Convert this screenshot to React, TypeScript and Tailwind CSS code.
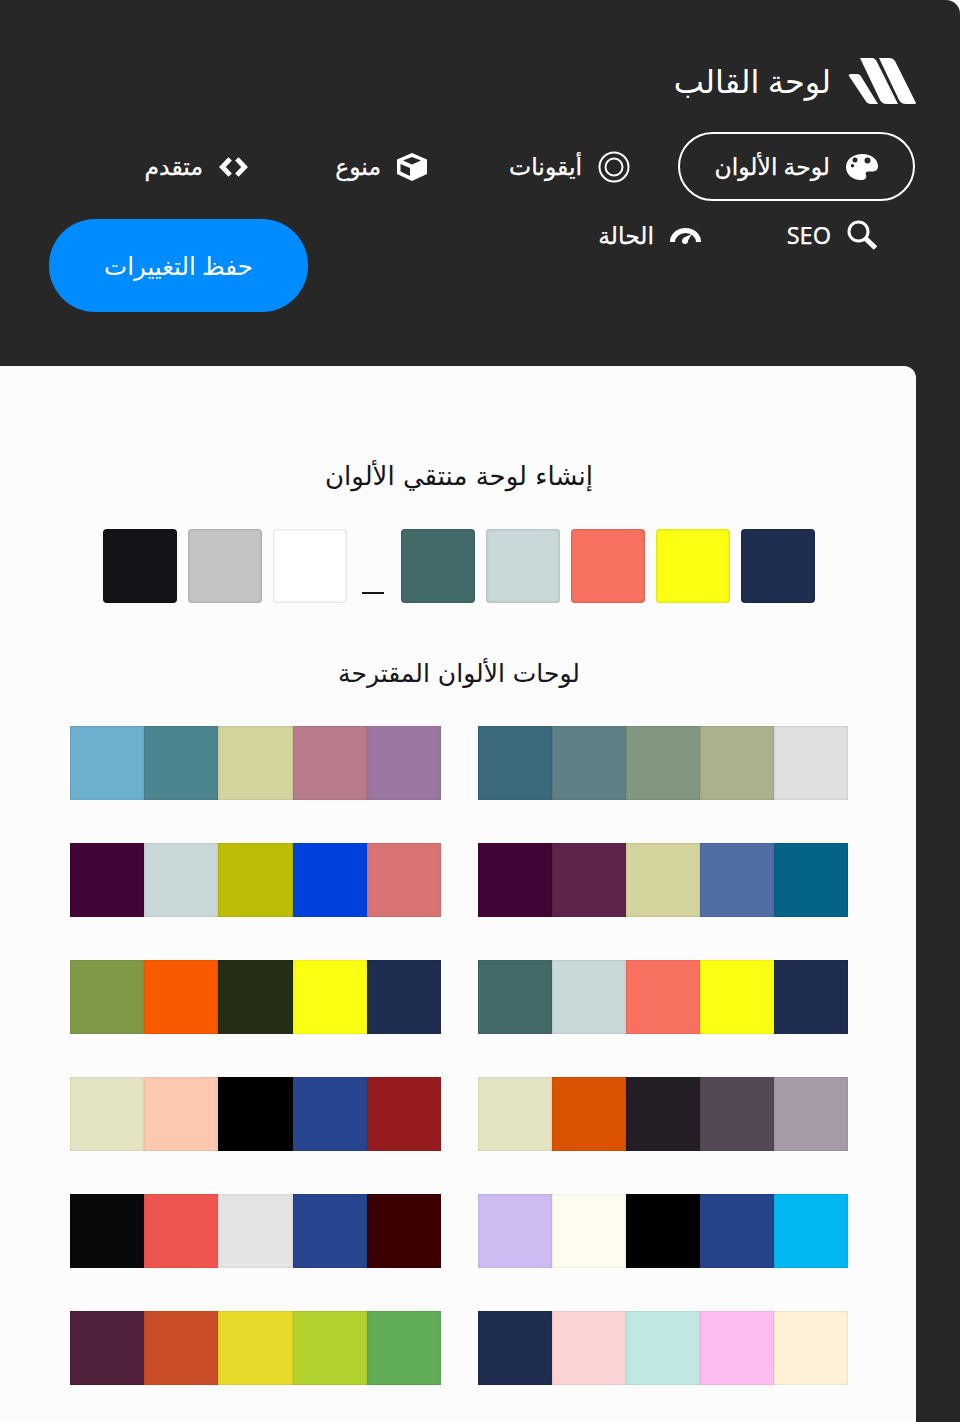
import type { ReactNode } from "react";

const rows: [string[], string[]][] = [
  [
    ["#3a6a7c", "#5f8085", "#81977f", "#acb08c", "#e0dfe0"],
    ["#6db0cc", "#4c8490", "#d3d39d", "#b87b8b", "#9b76a0"],
  ],
  [
    ["#400635", "#5f2449", "#d3d39d", "#506ea4", "#066388"],
    ["#400635", "#c9d9da", "#bdbd06", "#0041de", "#d97272"],
  ],
  [
    ["#426a69", "#c9d9da", "#f87060", "#fbff12", "#1f2d50"],
    ["#7f9947", "#f95a00", "#242f16", "#fbff12", "#1f2d50"],
  ],
  [
    ["#e4e4c2", "#db5202", "#231d24", "#544856", "#a69aa8"],
    ["#e4e4c2", "#fdc9ae", "#000000", "#27468f", "#961b1f"],
  ],
  [
    ["#cdbcf2", "#fefcef", "#000000", "#25448c", "#00b8ef"],
    ["#08090b", "#ee5550", "#e4e4e4", "#27468f", "#3c0000"],
  ],
  [
    ["#1f2d50", "#fcd3d4", "#c1e7e3", "#fdbdf0", "#fdf2d8"],
    ["#50203c", "#c94e28", "#e8d92a", "#b1d22e", "#60ac57"],
  ],
];

const Logo = () => (
  <svg viewBox="0 0 68 46" className="h-[46px] w-[68px] fill-white">
    <path d="M1 18 Q0 16 3 16 H9 Q12 16 14 20 L30 46 H23 Q19 46 17 42 Z" />
    <path d="M12 0 H24 Q27 0 29 4 L50 46 H39 Q34 46 32 42 Z" />
    <path d="M31 0 H42 Q45 0 47 3 L68 45 Q68 46 66 46 H58 Q53 46 51 42 Z" />
  </svg>
);

const PaletteIcon = () => (
  <svg viewBox="0 0 32 26" className="h-[26px] w-8 shrink-0 fill-white">
    <path
      fillRule="evenodd"
      d="M16 0 C26 0 32 6 32 12 C32 17 28 18 24 17.5 C20 17 19 19 20 21 C21 24 19 26 15 26 C6 26 0 20 0 13 C0 5 8 0 16 0 Z M9 3.5 A2.5 2.5 0 1 0 9 8.5 A2.5 2.5 0 1 0 9 3.5 Z M21.5 3.5 A3 3 0 1 0 21.5 9.5 A3 3 0 1 0 21.5 3.5 Z M6.5 10 A1.7 1.7 0 1 0 6.5 13.4 A1.7 1.7 0 1 0 6.5 10 Z"
    />
  </svg>
);

const RingIcon = () => (
  <svg viewBox="0 0 32 32" className="h-8 w-8 shrink-0 fill-none stroke-white stroke-2">
    <circle cx="16" cy="16" r="14.5" />
    <circle cx="16" cy="16" r="8.5" />
  </svg>
);

const CubeIcon = () => (
  <svg viewBox="0 0 30 28" className="h-7 w-[30px] shrink-0 fill-white">
    <path
      fillRule="evenodd"
      d="M15 0 L30 6.5 V21 L15 28 L0 21 V6.5 Z M15 4 L6 7.5 L15 11.5 L24 7.5 Z M3.5 11 V18.5 L13 23 V15 Z"
    />
  </svg>
);

const CodeIcon = () => (
  <svg viewBox="0 0 30 20" className="h-5 w-[29px] shrink-0 fill-none stroke-white stroke-[5px]">
    <path d="M11.5 1.5 L3.5 10 L11.5 18.5" />
    <path d="M18.5 1.5 L26.5 10 L18.5 18.5" />
  </svg>
);

const SearchIcon = () => (
  <svg viewBox="0 0 31 31" className="h-[31px] w-[31px] shrink-0 fill-none stroke-white">
    <circle cx="11.5" cy="11.5" r="9.5" strokeWidth="3" />
    <path d="M18 18 L28.5 28" strokeWidth="5" />
  </svg>
);

const GaugeIcon = () => (
  <svg viewBox="0 0 31 16" className="h-4 w-[31px] shrink-0">
    <path d="M0 14 A15.5 14 0 0 1 31 14 L26 14 A10.5 9 0 0 0 5 14 Z" fill="white" />
    <path d="M13 10 L22 6 L17 14 Z" fill="white" />
    <circle cx="15" cy="13" r="3" fill="white" />
  </svg>
);

const NavItem = ({
  icon,
  label,
  active,
  width,
}: {
  icon: ReactNode;
  label: string;
  active?: boolean;
  width: string;
}) => (
  <div
    className={`flex h-[69px] items-center gap-[16px] rounded-[35px] border-2 px-[35px] text-[23.5px] whitespace-nowrap text-white [-webkit-text-stroke:0.25px_white] ${width} ${
      active ? "border-white" : "border-transparent"
    }`}
  >
    {icon}
    <span>{label}</span>
  </div>
);

const Swatch = ({ color }: { color: string }) => (
  <div
    className="h-[74px] w-[74px] rounded-[4px] shadow-[inset_0_0_3px_rgba(0,0,0,0.25)]"
    style={{ backgroundColor: color }}
  />
);

const Palette = ({ colors }: { colors: string[] }) => (
  <div className="flex h-[74px]">
    {colors.map((c, i) => (
      <div
        key={i}
        className="h-full flex-1 shadow-[inset_0_0_2px_rgba(0,0,0,0.2)]"
        style={{ backgroundColor: c }}
      />
    ))}
  </div>
);

export default function App() {
  return (
    <div
      dir="rtl"
      className="h-[1422px] w-[960px] overflow-hidden bg-white font-['Noto_Sans','DejaVu_Sans',sans-serif]"
    >
      <div className="h-full rounded-tr-[14px] bg-[#272727] pt-[58px]">
        {/* Header */}
        <div className="flex items-center gap-[17px] pr-[44px]">
          <Logo />
          <h1 className="text-[32px] leading-[46px] font-normal text-white">لوحة القالب</h1>
        </div>

        {/* Tabs */}
        <div className="mt-[28px] h-[234px] pr-[45px] pl-[49px]">
          <div className="flex gap-[11px]">
            <NavItem active width="w-[237px]" icon={<PaletteIcon />} label="لوحة الألوان" />
            <NavItem width="w-[192px]" icon={<RingIcon />} label="أيقونات" />
            <NavItem width="w-[168px]" icon={<CubeIcon />} label="منوع" />
            <NavItem width="w-[183px]" icon={<CodeIcon />} label="متقدم" />
          </div>
          <div className="flex items-start justify-between">
            <div className="flex gap-[12px]">
              <NavItem width="w-[165px]" icon={<SearchIcon />} label="SEO" />
              <NavItem width="w-[177px]" icon={<GaugeIcon />} label="الحالة" />
            </div>
            <button className="mt-[18px] h-[93px] w-[259px] rounded-[46px] bg-[#008cff] pt-[2px] text-[24.5px] text-white">
              حفظ التغييرات
            </button>
          </div>
        </div>

        {/* Panel */}
        <div className="mr-auto h-[1056px] w-[916px] rounded-tr-[12px] bg-[#fcfcfc] pt-[92px] pr-[68px] pl-[70px] text-[#15151a]">
          <h2 className="text-center font-['DejaVu_Sans',sans-serif] text-[26px] leading-[37px] font-normal">
            إنشاء لوحة منتقي الألوان
          </h2>
          <div className="mt-[34px] flex items-end justify-center gap-[11px]">
            {["#1f2d50", "#fbff12", "#f87060", "#c9d9da", "#426a69"].map((c) => (
              <Swatch key={c} color={c} />
            ))}
            <div className="mr-[6px] mb-[9px] ml-[4px] h-[2px] w-[22px] bg-[#15151a]" />
            {["#ffffff", "#c4c4c4", "#131318"].map((c) => (
              <Swatch key={c} color={c} />
            ))}
          </div>
          <h2 className="mt-[53px] text-center font-['DejaVu_Sans',sans-serif] text-[25px] leading-[36px] font-normal">
            لوحات الألوان المقترحة
          </h2>
          <div className="mt-[34px] grid grid-cols-[371px_370px] gap-x-[37px] gap-y-[43px]" dir="ltr">
            {rows.flatMap(([right, left], i) => [
              <Palette key={`l${i}`} colors={left} />,
              <Palette key={`r${i}`} colors={right} />,
            ])}
          </div>
        </div>
      </div>
    </div>
  );
}
